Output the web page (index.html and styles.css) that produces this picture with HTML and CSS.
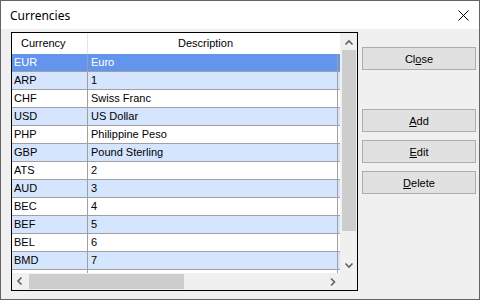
FILE: index.html
```html
<!DOCTYPE html>
<html lang="en">
<head>
    <meta charset="UTF-8">
    <title>Currencies</title>
    <link rel="stylesheet" href="styles.css">
</head>
<body>
    <div class="window">
        <div class="titlebar">
            <span class="title">Currencies</span>
            <svg class="close-x" width="11" height="11" viewBox="0 0 11 11">
                <path d="M0.5 0.5 L10.5 10.5 M10.5 0.5 L0.5 10.5" stroke="#000" stroke-width="1" fill="none"/>
            </svg>
        </div>
        <div class="content">
            <div class="grid">
                <div class="view">
                    <div class="head">
                        <div class="hc c1">Currency</div>
                        <div class="hc c2">Description</div>
                    </div>
                    <div class="row sel"><div class="cell c1">EUR</div><div class="cell c2">Euro</div></div>
                    <div class="row alt"><div class="cell c1">ARP</div><div class="cell c2">1</div></div>
                    <div class="row"><div class="cell c1">CHF</div><div class="cell c2">Swiss Franc</div></div>
                    <div class="row alt"><div class="cell c1">USD</div><div class="cell c2">US Dollar</div></div>
                    <div class="row"><div class="cell c1">PHP</div><div class="cell c2">Philippine Peso</div></div>
                    <div class="row alt"><div class="cell c1">GBP</div><div class="cell c2">Pound Sterling</div></div>
                    <div class="row"><div class="cell c1">ATS</div><div class="cell c2">2</div></div>
                    <div class="row alt"><div class="cell c1">AUD</div><div class="cell c2">3</div></div>
                    <div class="row"><div class="cell c1">BEC</div><div class="cell c2">4</div></div>
                    <div class="row alt"><div class="cell c1">BEF</div><div class="cell c2">5</div></div>
                    <div class="row"><div class="cell c1">BEL</div><div class="cell c2">6</div></div>
                    <div class="row alt"><div class="cell c1">BMD</div><div class="cell c2">7</div></div>
                    <div class="row"><div class="cell c1"></div><div class="cell c2"></div></div>
                </div>
                <div class="vscroll">
                    <div class="sbtn">
                        <svg width="17" height="17"><polyline points="5.5,11.5 9,8 12.5,11.5" stroke="#606060" stroke-width="1.6" fill="none"/></svg>
                    </div>
                    <div class="vthumb"></div>
                    <div class="vtrack"></div>
                    <div class="sbtn">
                        <svg width="17" height="17"><polyline points="5.5,7.5 9,11 12.5,7.5" stroke="#606060" stroke-width="1.6" fill="none"/></svg>
                    </div>
                </div>
                <div class="hscroll">
                    <div class="sbtn">
                        <svg width="17" height="17"><polyline points="9.5,4.5 6,8 9.5,11.5" stroke="#606060" stroke-width="1.6" fill="none"/></svg>
                    </div>
                    <div class="hthumb"></div>
                    <div class="htrack"></div>
                    <div class="sbtn">
                        <svg width="17" height="17"><polyline points="8,5.5 11.5,9 8,12.5" stroke="#606060" stroke-width="1.6" fill="none"/></svg>
                    </div>
                </div>
                <div class="corner"></div>
            </div>
            <div class="buttons">
                <button class="btn btn-close">Cl<u>o</u>se</button>
                <button class="btn btn-add"><u>A</u>dd</button>
                <button class="btn"><u>E</u>dit</button>
                <button class="btn"><u>D</u>elete</button>
            </div>
        </div>
    </div>
</body>
</html>
```

FILE: styles.css
```css
body {
    margin: 0;
    background: #fff;
    font-family: "Liberation Sans", Arial, sans-serif;
    font-size: 11px;
}
.window {
    width: 480px;
    height: 300px;
    box-sizing: border-box;
    border: 1px solid #646464;
    background: #f0f0f0;
}
.titlebar {
    height: 28px;
    background: #fff;
    display: flex;
    align-items: center;
    justify-content: space-between;
    padding: 0 10px 0 9px;
}
.title {
    font-family: "Noto Sans", sans-serif;
    font-size: 12px;
    color: #000;
}
.content {
    display: flex;
    padding: 3px 0 0 10px;
}
.grid {
    width: 347px;
    height: 259px;
    box-sizing: border-box;
    border: 1px solid #000;
    display: grid;
    grid-template-columns: 328px 17px;
    grid-template-rows: 240px 17px;
    background: #fff;
}
.view {
    overflow: hidden;
    background: #fff;
}
.head {
    display: flex;
    height: 21px;
    background: #fff;
}
.hc {
    box-sizing: border-box;
    line-height: 21px;
    color: #000;
}
.head .c1 {
    padding-left: 9px;
    border-right: 1px solid #e5e5e5;
}
.head .c2 {
    padding-left: 90px;
}
.row {
    display: flex;
    height: 18px;
    box-sizing: border-box;
    border-bottom: 1px solid #a0a0a0;
    background: #fff;
    color: #000;
}
.row.alt {
    background: #d6e5fe;
}
.row.sel {
    background: #6495ed;
    color: #fff;
}
.c1 {
    width: 76px;
    flex: none;
}
.c2 {
    width: 250px;
    flex: none;
}
.cell {
    box-sizing: border-box;
    border-right: 1px solid #a0a0a0;
    line-height: 17px;
    white-space: nowrap;
}
.cell.c1 {
    padding-left: 2px;
}
.cell.c2 {
    padding-left: 3px;
}
.vscroll {
    display: flex;
    flex-direction: column;
    background: #f0f0f0;
}
.hscroll {
    display: flex;
    background: #f0f0f0;
}
.sbtn {
    width: 17px;
    height: 17px;
    flex: none;
}
.sbtn svg {
    display: block;
}
.vthumb {
    height: 181px;
    margin: 0 1px 0 2px;
    background: #cdcdcd;
}
.vtrack {
    flex: 1;
}
.hthumb {
    width: 155px;
    margin: 1px 0 1px 0;
    background: #cdcdcd;
}
.htrack {
    flex: 1;
}
.corner {
    background: #f0f0f0;
}
.buttons {
    display: flex;
    flex-direction: column;
    padding: 15px 0 0 4px;
}
.btn {
    width: 114px;
    height: 23px;
    box-sizing: border-box;
    border: 1px solid #adadad;
    background: #e1e1e1;
    font-family: "Liberation Sans", Arial, sans-serif;
    font-size: 11px;
    color: #000;
    padding: 0;
    margin-bottom: 8px;
}
.btn-close {
    margin-bottom: 39px;
}
```
